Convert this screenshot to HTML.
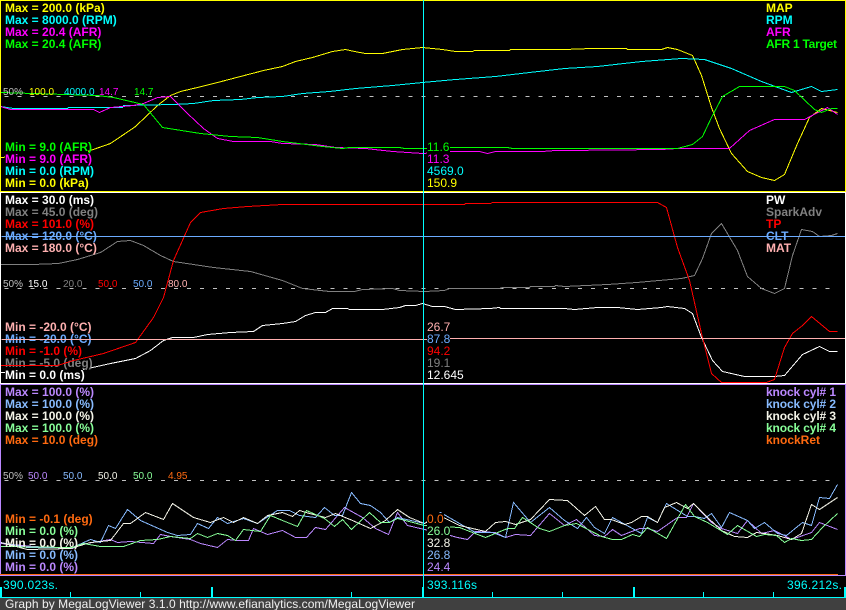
<!DOCTYPE html>
<html>
<head>
<meta charset="utf-8">
<style>
html,body{margin:0;padding:0;background:#000;width:846px;height:610px;overflow:hidden}
svg{display:block}
text{font-family:"Liberation Sans",Arial,sans-serif;font-size:12px;white-space:pre}
.b{font-weight:bold}
.s{font-size:10px}
polyline,line{fill:none;stroke-width:1;shape-rendering:crispEdges}
rect{shape-rendering:crispEdges}
</style>
</head>
<body>
<svg width="846" height="610" viewBox="0 0 846 610" xmlns="http://www.w3.org/2000/svg">
<rect x="0" y="0" width="846" height="610" fill="#000"/>

<!-- panel 1 -->
<g transform="translate(.5,.5)">
<line x1="4" x2="837" y1="96" y2="96" stroke="#c0c0c0" stroke-dasharray="4 9.03"/>
<polyline stroke="#ffff00" points="0,157 87,151 110,143 135,126 157,105 170,95 180,91 197,87 217,82 240,76 263,70 282,66 295,61 312,57 332,51 345,49 354,51 365,53 382,53 402,49 422,47 442,49 455,51 472,51 474,50 509,50 510,49 564,49 591,48 626,48 627,49 661,49 667,47 677,49 692,55 701,75 711,107 719,128 731,153 747,171 761,177 774,180 784,174 797,143 809,117 821,108 837,112"/>
</g>
<rect x="5" y="177" width="83" height="12" fill="#000"/>
<text class="b" x="5" y="187" fill="#ffff00">Min = 0.0 (kPa)</text>
<g transform="translate(.5,.5)">
<polyline stroke="#00ffff" points="0,106 13,108 67,108 68,107 122,107 123,105 173,104 193,103 213,100 240,99 257,97 282,96 302,93 329,91 355,88 392,85 422,82 455,79 495,76 529,72 564,68 597,66 641,61 681,58 704,59 731,68 761,81 791,92 811,86 821,91 837,89"/>
</g>
<rect x="5" y="165" width="87" height="12" fill="#000"/>
<text class="b" x="5" y="175" fill="#00ffff">Min = 0.0 (RPM)</text>
<g transform="translate(.5,.5)">
<polyline stroke="#ff00ff" points="0,106 10,109 93,109 99,112 110,107 133,105 143,103 157,97 170,96 187,113 203,128 217,138 233,141 270,141 282,143 315,144 335,147 365,148 392,151 422,153 450,151 479,151 487,153 495,151 542,151 555,150 564,150 661,149 677,148 729,148 749,130 774,119 804,119 827,107 837,114"/>
</g>
<rect x="5" y="153" width="83" height="12" fill="#000"/>
<text class="b" x="5" y="163" fill="#ff00ff">Min = 9.0 (AFR)</text>
<g transform="translate(.5,.5)">
<polyline stroke="#00ff00" points="0,92 97,95 113,97 143,104 162,127 200,133 230,136 257,137 282,141 322,146 342,148 349,147 399,147 404,148 425,148 449,147 507,147 512,148 564,148 677,148 692,144 702,136 711,117 722,96 739,86 784,86 794,90 814,109 821,112 831,108 837,108"/>
</g>
<rect x="5" y="141" width="83" height="12" fill="#000"/>
<text class="b" x="5" y="151" fill="#00ff00">Min = 9.0 (AFR)</text>

<text class="b" x="5" y="12" fill="#ffff00">Max = 200.0 (kPa)</text>
<text class="b" x="5" y="24" fill="#00ffff">Max = 8000.0 (RPM)</text>
<text class="b" x="5" y="36" fill="#ff00ff">Max = 20.4 (AFR)</text>
<text class="b" x="5" y="48" fill="#00ff00">Max = 20.4 (AFR)</text>
<text class="b" x="766" y="12" fill="#ffff00">MAP</text>
<text class="b" x="766" y="24" fill="#00ffff">RPM</text>
<text class="b" x="766" y="36" fill="#ff00ff">AFR</text>
<text class="b" x="766" y="48" fill="#00ff00" textLength="71">AFR 1 Target</text>
<text class="s" x="3" y="95" fill="#c0c0c0">50%</text>
<text class="s" x="29" y="95" fill="#ffff00">100.0</text>
<text class="s" x="64" y="95" fill="#00ffff">4000.0</text>
<text class="s" x="99" y="95" fill="#ff00ff">14.7</text>
<text class="s" x="134" y="95" fill="#00ff00">14.7</text>

<!-- panel 2 -->
<g transform="translate(.5,.5)">
<line x1="4" x2="837" y1="288" y2="288" stroke="#c0c0c0" stroke-dasharray="4 9.03"/>
<polyline stroke="#ffffff" points="0,372 83,369 110,363 135,358 150,350 163,340 172,337 193,337 207,334 230,332 253,331 262,325 282,323 295,321 305,315 315,312 325,312 332,308 347,308 349,309 382,309 399,307 405,305 415,305 422,303 432,306 444,306 455,309 490,308 499,307 500,308 545,308 564,308 574,309 597,307 617,307 637,309 661,307 667,306 684,308 692,313 701,337 712,360 722,371 744,376 774,376 784,375 802,354 819,346 829,351 837,351"/>
</g>
<rect x="5" y="369" width="78" height="12" fill="#000"/>
<text class="b" x="5" y="379" fill="#ffffff">Min = 0.0 (ms)</text>
<g transform="translate(.5,.5)">
<polyline stroke="#808080" points="0,264 32,264 58,263 77,259 100,252 117,241 130,240 143,245 160,255 173,261 213,267 250,271 282,280 302,288 329,291 354,291 362,289 392,288 399,290 424,291 444,290 449,288 499,288 502,287 529,287 530,286 554,286 555,285 564,286 607,284 636,282 681,278 694,275 702,258 711,233 721,223 737,250 747,276 761,288 774,293 784,288 792,255 801,229 812,231 819,236 831,235 837,233"/>
</g>
<rect x="5" y="357" width="86" height="12" fill="#000"/>
<text class="b" x="5" y="367" fill="#808080">Min = -5.0 (deg)</text>
<g transform="translate(.5,.5)">
<polyline stroke="#ff0000" points="0,365 57,365 73,360 103,353 135,342 153,317 163,297 173,260 190,222 200,212 223,208 247,206 282,204 464,204 465,203 490,203 492,202 564,202 657,202 666,207 677,247 689,280 701,333 711,373 721,382 766,382 774,379 784,347 792,333 802,325 811,316 829,331 837,331"/>
</g>
<rect x="5" y="345" width="74" height="12" fill="#000"/>
<text class="b" x="5" y="355" fill="#ff0000">Min = -1.0 (%)</text>
<g transform="translate(.5,.5)"><line x1="1" x2="845" y1="236" y2="236" stroke="#6cacff"/></g>
<rect x="5" y="333" width="85" height="12" fill="#000"/>
<text class="b" x="5" y="343" fill="#6cacff">Min = -20.0 (°C)</text>
<g transform="translate(.5,.5)"><line x1="1" x2="427" y1="339" y2="339" stroke="#ffb0b0"/><line x1="427" x2="845" y1="338" y2="338" stroke="#ffb0b0"/></g>
<rect x="5" y="321" width="85" height="12" fill="#000"/>
<text class="b" x="5" y="331" fill="#ffb0b0">Min = -20.0 (°C)</text>

<text class="b" x="5" y="204" fill="#ffffff">Max = 30.0 (ms)</text>
<text class="b" x="5" y="216" fill="#808080">Max = 45.0 (deg)</text>
<text class="b" x="5" y="228" fill="#ff0000">Max = 101.0 (%)</text>
<text class="b" x="5" y="240" fill="#6cacff">Max = 120.0 (°C)</text>
<text class="b" x="5" y="252" fill="#ffb0b0">Max = 180.0 (°C)</text>
<text class="b" x="766" y="204" fill="#ffffff">PW</text>
<text class="b" x="766" y="216" fill="#808080">SparkAdv</text>
<text class="b" x="766" y="228" fill="#ff0000">TP</text>
<text class="b" x="766" y="240" fill="#6cacff">CLT</text>
<text class="b" x="766" y="252" fill="#ffb0b0">MAT</text>
<text class="s" x="3" y="287" fill="#c0c0c0">50%</text>
<text class="s" x="28" y="287" fill="#ffffff">15.0</text>
<text class="s" x="63" y="287" fill="#808080">20.0</text>
<text class="s" x="98" y="287" fill="#ff0000">50.0</text>
<text class="s" x="133" y="287" fill="#6cacff">50.0</text>
<text class="s" x="168" y="287" fill="#ffb0b0">80.0</text>

<!-- panel 3 -->
<g transform="translate(.5,.5)">
<line x1="4" x2="837" y1="480" y2="480" stroke="#c0c0c0" stroke-dasharray="4 9.03"/>
<polyline stroke="#bb88ff" points="0,543 33,546 72,548 80,544 110,539 117,542 130,541 153,543 160,534 170,536 190,539 200,543 217,547 227,539 237,540 248,540 253,528 267,534 282,530 295,537 306,537 315,527 325,529 344,507 362,517 375,528 388,534 397,512 407,525 424,529 439,532 457,537 467,539 475,531 495,532 505,537 515,534 530,535 549,513 564,525 576,519 594,535 604,536 612,529 621,535 639,528 647,528 657,531 677,517 686,517 693,503 711,522 721,528 737,533 747,520 761,533 774,530 791,539 811,532 819,522 837,529"/>
<polyline stroke="#88bbff" points="0,542 27,547 72,547 90,539 100,542 108,525 115,528 127,509 140,520 167,532 177,535 190,534 197,523 208,528 217,517 227,523 243,518 257,523 277,510 289,510 299,515 315,517 324,507 334,515 342,515 351,492 360,503 370,505 380,512 389,522 397,517 424,523 440,512 459,523 475,532 492,532 505,537 513,502 530,522 549,507 564,520 577,528 586,517 594,527 604,533 612,517 641,533 647,517 657,522 666,503 687,516 694,516 704,518 711,513 721,527 729,512 747,520 754,528 764,522 777,533 786,535 802,522 811,525 819,497 829,498 837,484"/>
<polyline stroke="#f4f4e8" points="0,542 27,549 70,548 90,542 110,540 123,523 130,523 145,512 163,519 172,503 193,517 210,522 223,517 233,522 243,517 257,523 267,515 282,512 292,516 299,510 309,513 325,517 335,513 352,520 370,528 385,520 397,509 409,517 424,523 439,515 459,525 485,531 495,522 505,521 515,524 530,519 549,499 567,500 584,515 595,506 604,519 611,519 624,524 631,522 641,516 647,516 657,522 664,507 676,502 687,508 693,503 707,517 721,530 734,536 747,537 756,532 764,533 777,535 791,539 801,533 811,504 819,509 837,497"/>
<polyline stroke="#88ff99" points="0,546 72,547 83,543 100,546 123,546 140,540 157,539 170,536 190,538 197,533 207,537 217,533 227,535 235,540 243,529 260,531 270,515 282,520 297,526 306,510 324,518 334,526 342,519 351,529 369,512 380,522 389,522 397,518 424,525 459,527 485,537 507,528 514,528 522,517 539,528 549,531 564,525 576,523 601,536 612,539 621,539 632,534 639,536 647,527 666,538 685,504 694,516 707,522 727,534 737,525 756,536 764,534 776,535 784,542 791,538 801,540 811,539 822,527 837,513"/>
</g>
<text class="b" x="5" y="571" fill="#bb88ff">Min = 0.0 (%)</text>
<text class="b" x="5" y="559" fill="#88bbff">Min = 0.0 (%)</text>
<text class="b" x="5" y="547" fill="#f4f4e8">Min = 0.0 (%)</text>
<text class="b" x="5" y="535" fill="#88ff99">Min = 0.0 (%)</text>
<text class="b" x="5" y="523" fill="#ff6a10">Min = -0.1 (deg)</text>

<text class="b" x="5" y="396" fill="#bb88ff">Max = 100.0 (%)</text>
<text class="b" x="5" y="408" fill="#88bbff">Max = 100.0 (%)</text>
<text class="b" x="5" y="420" fill="#f4f4e8">Max = 100.0 (%)</text>
<text class="b" x="5" y="432" fill="#88ff99">Max = 100.0 (%)</text>
<text class="b" x="5" y="444" fill="#ff6a10">Max = 10.0 (deg)</text>
<text class="b" x="766" y="396" fill="#bb88ff" textLength="70">knock cyl# 1</text>
<text class="b" x="766" y="408" fill="#88bbff" textLength="70">knock cyl# 2</text>
<text class="b" x="766" y="420" fill="#f4f4e8" textLength="70">knock cyl# 3</text>
<text class="b" x="766" y="432" fill="#88ff99" textLength="70">knock cyl# 4</text>
<text class="b" x="766" y="444" fill="#ff6a10">knockRet</text>
<text class="s" x="3" y="479" fill="#c0c0c0">50%</text>
<text class="s" x="28" y="479" fill="#bb88ff">50.0</text>
<text class="s" x="63" y="479" fill="#88bbff">50.0</text>
<text class="s" x="98" y="479" fill="#f4f4e8">50.0</text>
<text class="s" x="133" y="479" fill="#88ff99">50.0</text>
<text class="s" x="168" y="479" fill="#ff6a10">4.95</text>

<!-- borders -->
<rect x="0" y="0" width="846" height="1" fill="#ffff00"/>
<rect x="0" y="191" width="846" height="1" fill="#ffff00"/>
<rect x="0" y="0" width="1" height="192" fill="#ffff00"/>
<rect x="845" y="0" width="1" height="192" fill="#ffff00"/>
<rect x="0" y="192" width="846" height="1" fill="#ffffff"/>
<rect x="0" y="383" width="846" height="1" fill="#ffffff"/>
<rect x="0" y="192" width="1" height="192" fill="#ffffff"/>
<rect x="845" y="192" width="1" height="192" fill="#ffffff"/>
<rect x="0" y="384" width="846" height="1" fill="#bb88ff"/>
<rect x="0" y="575" width="846" height="1" fill="#bb88ff"/>
<rect x="0" y="384" width="1" height="192" fill="#bb88ff"/>
<rect x="845" y="384" width="1" height="192" fill="#bb88ff"/>
<rect x="0" y="574" width="838" height="1" fill="#ff6a10"/>

<!-- crosshair -->
<rect x="423" y="0" width="1" height="597" fill="#00ffff"/>

<!-- values -->
<rect x="427" y="141" width="23" height="12" fill="#000"/><text x="427" y="151" fill="#00ff00">11.6</text>
<rect x="427" y="153" width="23" height="12" fill="#000"/><text x="427" y="163" fill="#ff00ff">11.3</text>
<rect x="427" y="165" width="37" height="12" fill="#000"/><text x="427" y="175" fill="#00ffff">4569.0</text>
<rect x="427" y="177" width="30" height="12" fill="#000"/><text x="427" y="187" fill="#ffff00">150.9</text>

<rect x="427" y="321" width="23" height="12" fill="#000"/><text x="427" y="331" fill="#ffb0b0">26.7</text>
<rect x="427" y="333" width="23" height="12" fill="#000"/><text x="427" y="343" fill="#6cacff">87.8</text>
<rect x="427" y="345" width="23" height="12" fill="#000"/><text x="427" y="355" fill="#ff0000">94.2</text>
<rect x="427" y="357" width="23" height="12" fill="#000"/><text x="427" y="367" fill="#808080">19.1</text>
<rect x="427" y="369" width="37" height="12" fill="#000"/><text x="427" y="379" fill="#ffffff">12.645</text>

<rect x="427" y="513" width="17" height="12" fill="#000"/><text x="427" y="523" fill="#ff6a10">0.0</text>
<rect x="427" y="525" width="23" height="12" fill="#000"/><text x="427" y="535" fill="#88ff99">26.0</text>
<rect x="427" y="537" width="23" height="12" fill="#000"/><text x="427" y="547" fill="#f4f4e8">32.8</text>
<rect x="427" y="549" width="23" height="12" fill="#000"/><text x="427" y="559" fill="#88bbff">26.8</text>
<rect x="427" y="561" width="23" height="12" fill="#000"/><text x="427" y="571" fill="#bb88ff">24.4</text>

<!-- time axis -->
<text x="3" y="589" fill="#00ffff" textLength="55">390.023s.</text>
<text x="427" y="589" fill="#00ffff" textLength="50">393.116s</text>
<text x="787" y="589" fill="#00ffff" textLength="55">396.212s.</text>
<rect x="0" y="597" width="846" height="1" fill="#00ffff"/>
<g fill="#00ffff">
<rect x="0" y="587" width="2" height="10"/>
<rect x="70" y="592" width="1" height="5"/>
<rect x="140" y="592" width="1" height="5"/>
<rect x="211" y="587" width="2" height="10"/>
<rect x="351" y="592" width="1" height="5"/>
<rect x="422" y="587" width="2" height="10"/>
<rect x="492" y="592" width="1" height="5"/>
<rect x="562" y="592" width="1" height="5"/>
<rect x="633" y="587" width="2" height="10"/>
<rect x="703" y="592" width="1" height="5"/>
<rect x="773" y="592" width="1" height="5"/>
<rect x="844" y="587" width="2" height="10"/>
</g>

<!-- footer -->
<rect x="0" y="598" width="846" height="12" fill="#404040"/>
<text x="5" y="608" fill="#f0f0f0" textLength="410">Graph by MegaLogViewer 3.1.0 http://www.efianalytics.com/MegaLogViewer</text>
</svg>
</body>
</html>
